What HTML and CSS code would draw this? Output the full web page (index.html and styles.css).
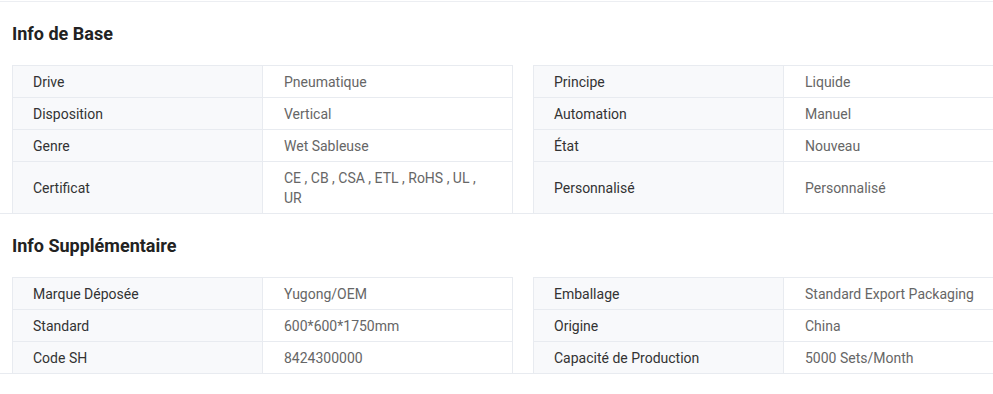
FILE: index.html
```html
<!DOCTYPE html>
<html lang="fr">
<head>
<meta charset="utf-8">
<title>Info</title>
<link rel="stylesheet" href="styles.css">
</head>
<body>
<div class="page">
  <section class="block">
    <h3 class="block-title">Info de Base</h3>
    <div class="spec">
      <div class="k">Drive</div><div class="v">Pneumatique</div><div class="gap"></div><div class="k">Principe</div><div class="v">Liquide</div>
      <div class="k">Disposition</div><div class="v">Vertical</div><div class="gap"></div><div class="k">Automation</div><div class="v">Manuel</div>
      <div class="k">Genre</div><div class="v">Wet Sableuse</div><div class="gap"></div><div class="k">État</div><div class="v">Nouveau</div>
      <div class="k">Certificat</div><div class="v">CE , CB , CSA , ETL , RoHS , UL , UR</div><div class="gap"></div><div class="k">Personnalisé</div><div class="v">Personnalisé</div>
    </div>
  </section>
  <section class="block">
    <h3 class="block-title">Info Supplémentaire</h3>
    <div class="spec">
      <div class="k">Marque Déposée</div><div class="v">Yugong/OEM</div><div class="gap"></div><div class="k">Emballage</div><div class="v">Standard Export Packaging</div>
      <div class="k">Standard</div><div class="v">600*600*1750mm</div><div class="gap"></div><div class="k">Origine</div><div class="v">China</div>
      <div class="k">Code SH</div><div class="v">8424300000</div><div class="gap"></div><div class="k">Capacité de Production</div><div class="v">5000 Sets/Month</div>
    </div>
  </section>
</div>
</body>
</html>
```

FILE: styles.css
```css
html, body {
  margin: 0;
  padding: 0;
  background: #ffffff;
  overflow: hidden;
}
body {
  font-family: Roboto, "Liberation Sans", Arial, sans-serif;
  font-size: 14px;
  color: #333;
}
.page {
  margin-top: 1px;
  border-top: 1px solid #eceef2;
  width: 1100px;
}
.block {
  padding: 20px 0 0 12px;
  border-bottom: 1px solid #e8ebf0;
}
.block-title {
  margin: 0 0 19px;
  font-size: 18px;
  line-height: 24px;
  font-weight: 700;
  color: #222;
}
.spec {
  display: grid;
  grid-template-columns: 250px 251px 20px 250px 251px;
}
.spec .k,
.spec .v {
  border-top: 1px solid #e8ebf0;
  border-left: 1px solid #e8ebf0;
  padding: 6px 20px 5px 20px;
  line-height: 20px;
  display: flex;
  align-items: center;
}
.spec .k {
  background: #f8f9fb;
  color: #333;
  padding-left: 20px;
}
.spec .v {
  border-right: 1px solid #e8ebf0;
  color: #666;
  padding-left: 21px;
}
```
